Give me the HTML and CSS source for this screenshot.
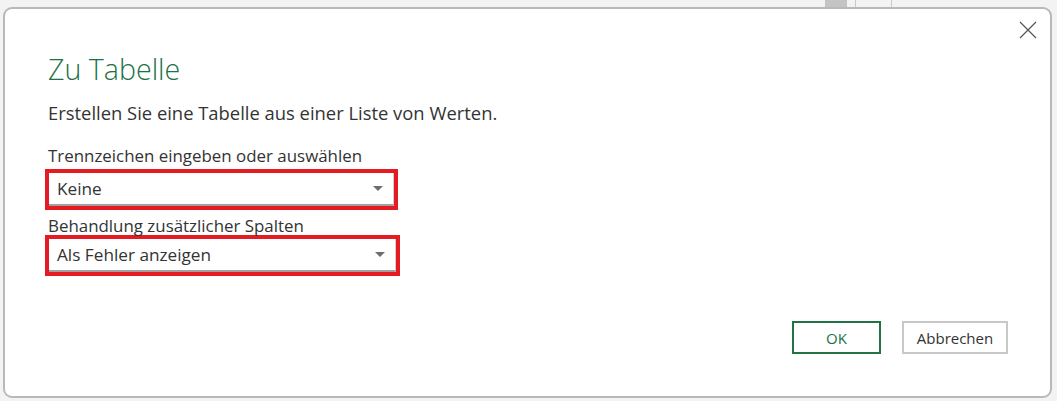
FILE: index.html
```html
<!DOCTYPE html>
<html lang="de">
<head>
<meta charset="utf-8">
<title>Zu Tabelle</title>
<link rel="stylesheet" href="styles.css">
</head>
<body>
<div class="backdrop">
  <div class="bg-thumb"></div>
  <div class="bg-line bg-line-1"></div>
  <div class="bg-line bg-line-2"></div>
  <div class="dialog">
    <button class="close" aria-label="Schließen">
      <svg width="18" height="18" viewBox="0 0 18 18"><path d="M1 1 L17 17 M17 1 L1 17" stroke="#555" stroke-width="1.2" fill="none"/></svg>
    </button>
    <h1 class="title">Zu Tabelle</h1>
    <p class="desc">Erstellen Sie eine Tabelle aus einer Liste von Werten.</p>
    <div class="field">
      <label class="label">Trennzeichen eingeben oder auswählen</label>
      <div class="hl hl-1">
        <div class="select"><span>Keine</span><span class="arrow"></span></div>
      </div>
    </div>
    <div class="field field-2">
      <label class="label">Behandlung zusätzlicher Spalten</label>
      <div class="hl hl-2">
        <div class="select"><span>Als Fehler anzeigen</span><span class="arrow"></span></div>
      </div>
    </div>
    <div class="actions">
      <button class="btn btn-ok">OK</button>
      <button class="btn btn-cancel">Abbrechen</button>
    </div>
  </div>
</div>
</body>
</html>
```
FILE: styles.css
```css
* { box-sizing: border-box; }
html, body { margin: 0; padding: 0; }
body {
  width: 1057px;
  height: 401px;
  overflow: hidden;
  background: #f3f3f3;
  font-family: "Open Sans", "Noto Sans", sans-serif;
  color: #333;
}
.backdrop {
  position: relative;
  width: 1057px;
  height: 401px;
  padding: 7px 5px 3px 3px;
}
.bg-thumb {
  position: absolute;
  left: 825px; top: 0;
  width: 22px; height: 8px;
  background: #c4c4c4;
}
.bg-line {
  position: absolute;
  top: 0; width: 1px; height: 8px;
  background: #c8c8c8;
}
.bg-line-1 { left: 855px; }
.bg-line-2 { left: 891px; }
.dialog {
  position: relative;
  width: 1049px;
  height: 391px;
  background: #fff;
  border: 2px solid #b9b9b9;
  border-radius: 9px;
  padding: 0 0 0 43px;
  display: flex;
  flex-direction: column;
}
.close {
  position: absolute;
  top: 12px; right: 13px;
  width: 18px; height: 18px;
  border: 0; padding: 0;
  background: transparent;
}
.close svg { display: block; }
.title {
  margin: 42px 0 0 0;
  font-weight: 300;
  font-size: 28.6px;
  line-height: 36px;
  color: #1e7145;
}
.desc {
  margin: 14px 0 0 0;
  font-size: 18.4px;
  line-height: 24px;
}
.field { margin-top: 20px; }
.field-2 { margin-top: 5px; }
.label {
  display: block;
  font-size: 16.9px;
  line-height: 22px;
}
.hl {
  margin-left: -3px;
  border: 4px solid #e51b24;
  height: 41px;
}
.hl-1 { width: 353px; margin-top: 2px; }
.hl-2 { width: 355px; margin-top: -2px; }
.select {
  height: 33px;
  border-bottom: 2px solid #a0a0a0;
  border-right: 1px solid #d0d0d0;
  display: flex;
  align-items: center;
  justify-content: space-between;
  padding: 0 10px 0 8px;
  font-size: 17.2px;
}
.arrow {
  width: 0; height: 0;
  border-left: 5px solid transparent;
  border-right: 5px solid transparent;
  border-top: 5px solid #6d6d6d;
}
.actions {
  margin-top: auto;
  margin-bottom: 42px;
  margin-right: 42px;
  display: flex;
  justify-content: flex-end;
  gap: 21px;
}
.btn {
  height: 33px;
  font-family: inherit;
  font-size: 15px;
  background: #fff;
  cursor: pointer;
}
.btn-ok {
  width: 89px;
  border: 2px solid #217346;
  color: #217346;
}
.btn-cancel {
  width: 106px;
  border: 2px solid #c8c8c8;
  color: #333;
}
```
